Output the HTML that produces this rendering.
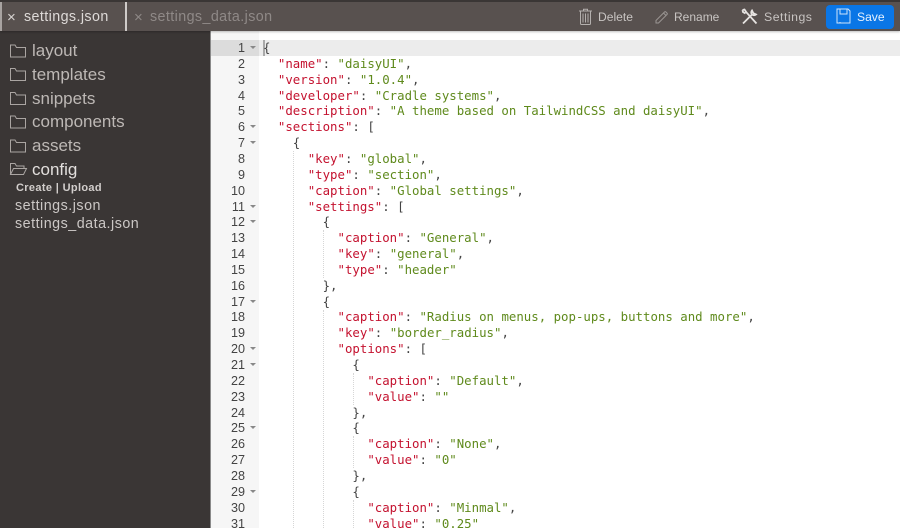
<!DOCTYPE html>
<html><head><meta charset="utf-8">
<style>
html,body{margin:0;padding:0;width:900px;height:528px;overflow:hidden;background:#fff}
body{position:relative;font-family:"Liberation Sans",sans-serif}
.a{position:absolute}
#hd{left:0;top:0;width:900px;height:31px;background:#58514f;border-top:2px solid #3a3635;box-sizing:border-box;box-shadow:0 1px 2px rgba(0,0,0,.25);z-index:3}
.t{position:absolute;white-space:nowrap;line-height:18px}
#side{left:0;top:31px;width:210px;height:497px;background:#3a3635}
#ln{left:210px;top:31px;width:1px;height:497px;background:#8a8a8a}
#gut{left:211px;top:31px;width:48px;height:497px;background:#f6f6f6}
.n{position:absolute;left:211px;width:34px;text-align:right;font-size:12.6px;line-height:16px;color:#444}
.f{position:absolute;left:250px;width:0;height:0;border-left:3px solid transparent;border-right:3px solid transparent;border-top:3.5px solid #888}
.c{position:absolute;left:263px;font-family:"DejaVu Sans Mono",monospace;font-size:12.38px;line-height:16px;color:#444;white-space:pre}
.k{color:#c4122f}.s{color:#5f8a1c}
.g{position:absolute;width:0;border-left:1px dotted #d6d6d6}
.side{color:#bdb8b5;font-size:17px}
</style></head><body>
<div class="a" id="hd"></div>
<div class="a" style="left:0;top:2px;width:2px;height:29px;background:#a8a3a1;z-index:4"></div>
<div class="a" style="left:125px;top:2px;width:2px;height:29px;background:#cfcbc9;z-index:4"></div>
<div style="position:absolute;left:0;top:0;width:900px;height:31px;z-index:5">
<div class="t" style="left:7px;top:9px;font-size:15px;color:#d8d4d2">×</div>
<div class="t" style="left:24px;top:8px;font-size:14.3px;letter-spacing:.4px;color:#dedad8">settings.json</div>
<div class="t" style="left:134px;top:9px;font-size:15px;color:#8f8987">×</div>
<div class="t" style="left:150px;top:8px;font-size:14.3px;letter-spacing:.4px;color:#8f8987">settings_data.json</div>

<svg class="a" style="left:578px;top:8px" width="16" height="17" viewBox="0 0 16 17" fill="none" stroke="#b4b0ae" stroke-width="1"><path d="M1 3h13M5.500 3V1.200h4V3M2.500 3v12.500a1 1 0 0 0 1 1h8a1 1 0 0 0 1-1V3M5 5.500v9M7.500 5.500v9M10 5.500v9"/></svg>
<div class="t" style="left:598px;top:8px;font-size:12.100px;color:#c8c4c2">Delete</div>
<svg class="a" style="left:655px;top:10px" width="14" height="14" viewBox="0 0 14 14" fill="none" stroke="#9a9593" stroke-width="1"><path d="M1 10.500 9.500 2a1 1 0 0 1 1.400 0l1.100 1.100a1 1 0 0 1 0 1.400L3.500 13H1zM8.500 3l2.500 2.500"/></svg>
<div class="t" style="left:674px;top:8px;font-size:12px;color:#c8c4c2">Rename</div>
<svg class="a" style="left:741px;top:8px" width="17" height="17" viewBox="0 0 17 17" fill="none" stroke="#e6e3e1" stroke-width="1.800"><path d="M2 15.500 11 6.500M11 2.500a3 3 0 0 0 0 4 3 3 0 0 0 4 0L12.800 5.500 12 4.500zM1.500 2 3.500 1.500 5.500 4.500 15.500 15.500M1.500 2 2 4 4.500 5.500"/></svg>
<div class="t" style="left:764px;top:8px;font-size:12.300px;letter-spacing:.5px;color:#c8c4c2">Settings</div>
<div class="a" style="left:825.500px;top:5px;width:68px;height:24px;background:#0a76e6;border-radius:4px"></div>
<svg class="a" style="left:836px;top:8px" width="15" height="16" viewBox="0 0 15 16" fill="none" stroke="#cfe4fb" stroke-width="1"><path d="M1 1h11l2 2v12H1zM4 1v5h7V1M4 15v-1"/></svg>
<div class="t" style="left:857px;top:8px;font-size:12.100px;color:#e6f1fd">Save</div>
</div>

<div class="a" id="side"></div>
<svg class="a" style="left:0;top:0" width="40" height="180" fill="none" stroke="#aaa5a2" stroke-width="1"><path d="M10.500 45V57h15V47.500h-9L15 45z"/><path d="M10.500 68.500V80.500h15V71h-9L15 68.500zM10.500 92.500V104.500h15V95h-9L15 92.500zM10.500 116V128h15V118.500h-9L15 116zM10.500 140V152h15V142.500h-9L15 140z"/><path d="M10.500 174.500V163.500H15L16.500 166H24V168.500M10.500 174.500 13.500 168.500H26.500L23.500 174.500z"/></svg>
<div class="t side" style="left:32px;top:42px">layout</div>
<div class="t side" style="left:32px;top:66px">templates</div>
<div class="t side" style="left:32px;top:90px">snippets</div>
<div class="t side" style="left:32px;top:113px">components</div>
<div class="t side" style="left:32px;top:137px">assets</div>
<div class="t side" style="left:32px;top:161px;color:#e2dfdd">config</div>
<div class="t" style="left:16px;top:179px;font-size:11px;font-weight:bold;color:#d2cecc;letter-spacing:.35px">Create | Upload</div>
<div class="t" style="left:15px;top:197px;font-size:14.300px;letter-spacing:.5px;color:#cbc7c5">settings.json</div>
<div class="t" style="left:15px;top:215px;font-size:14.300px;letter-spacing:.5px;color:#cbc7c5">settings_data.json</div>

<div class="a" id="ln"></div>
<div class="a" id="gut"></div>
<div class="a" style="left:259px;top:40px;width:641px;height:16px;background:#ececec"></div>
<div class="a" style="left:211px;top:40px;width:48px;height:16px;background:#dcdcdc"></div>
<div class="a" style="left:263px;top:40px;width:2px;height:16px;background:#a9a9a9"></div>

<div class="g" style="left:292.500px;top:151px;height:377px"></div>
<div class="g" style="left:322.500px;top:230px;height:48px"></div>
<div class="g" style="left:322.500px;top:310px;height:218px"></div>
<div class="g" style="left:352.500px;top:373px;height:32px"></div>
<div class="g" style="left:352.500px;top:436px;height:32px"></div>
<div class="g" style="left:352.500px;top:500px;height:28px"></div>

<div class="n" style="top:40px">1</div><div class="n" style="top:55.850px">2</div><div class="n" style="top:71.700px">3</div><div class="n" style="top:87.550px">4</div><div class="n" style="top:103.400px">5</div><div class="n" style="top:119.250px">6</div><div class="n" style="top:135.100px">7</div><div class="n" style="top:150.950px">8</div><div class="n" style="top:166.800px">9</div><div class="n" style="top:182.650px">10</div><div class="n" style="top:198.500px">11</div><div class="n" style="top:214.350px">12</div><div class="n" style="top:230.200px">13</div><div class="n" style="top:246.050px">14</div><div class="n" style="top:261.900px">15</div><div class="n" style="top:277.750px">16</div><div class="n" style="top:293.600px">17</div><div class="n" style="top:309.450px">18</div><div class="n" style="top:325.300px">19</div><div class="n" style="top:341.150px">20</div><div class="n" style="top:357px">21</div><div class="n" style="top:372.850px">22</div><div class="n" style="top:388.700px">23</div><div class="n" style="top:404.550px">24</div><div class="n" style="top:420.400px">25</div><div class="n" style="top:436.250px">26</div><div class="n" style="top:452.100px">27</div><div class="n" style="top:467.950px">28</div><div class="n" style="top:483.800px">29</div><div class="n" style="top:499.650px">30</div><div class="n" style="top:515.500px">31</div>

<div class="f" style="top:46px"></div><div class="f" style="top:125.250px"></div><div class="f" style="top:141.100px"></div><div class="f" style="top:204.500px"></div><div class="f" style="top:220.350px"></div><div class="f" style="top:299.600px"></div><div class="f" style="top:347.150px"></div><div class="f" style="top:363px"></div><div class="f" style="top:426.400px"></div><div class="f" style="top:489.800px"></div>

<div class="c" style="top:40px">{</div>
<div class="c" style="top:55.850px">  <span class="k">"name"</span>: <span class="s">"daisyUI"</span>,</div>
<div class="c" style="top:71.700px">  <span class="k">"version"</span>: <span class="s">"1.0.4"</span>,</div>
<div class="c" style="top:87.550px">  <span class="k">"developer"</span>: <span class="s">"Cradle systems"</span>,</div>
<div class="c" style="top:103.400px">  <span class="k">"description"</span>: <span class="s">"A theme based on TailwindCSS and daisyUI"</span>,</div>
<div class="c" style="top:119.250px">  <span class="k">"sections"</span>: [</div>
<div class="c" style="top:135.100px">    {</div>
<div class="c" style="top:150.950px">      <span class="k">"key"</span>: <span class="s">"global"</span>,</div>
<div class="c" style="top:166.800px">      <span class="k">"type"</span>: <span class="s">"section"</span>,</div>
<div class="c" style="top:182.650px">      <span class="k">"caption"</span>: <span class="s">"Global settings"</span>,</div>
<div class="c" style="top:198.500px">      <span class="k">"settings"</span>: [</div>
<div class="c" style="top:214.350px">        {</div>
<div class="c" style="top:230.200px">          <span class="k">"caption"</span>: <span class="s">"General"</span>,</div>
<div class="c" style="top:246.050px">          <span class="k">"key"</span>: <span class="s">"general"</span>,</div>
<div class="c" style="top:261.900px">          <span class="k">"type"</span>: <span class="s">"header"</span></div>
<div class="c" style="top:277.750px">        },</div>
<div class="c" style="top:293.600px">        {</div>
<div class="c" style="top:309.450px">          <span class="k">"caption"</span>: <span class="s">"Radius on menus, pop-ups, buttons and more"</span>,</div>
<div class="c" style="top:325.300px">          <span class="k">"key"</span>: <span class="s">"border_radius"</span>,</div>
<div class="c" style="top:341.150px">          <span class="k">"options"</span>: [</div>
<div class="c" style="top:357px">            {</div>
<div class="c" style="top:372.850px">              <span class="k">"caption"</span>: <span class="s">"Default"</span>,</div>
<div class="c" style="top:388.700px">              <span class="k">"value"</span>: <span class="s">""</span></div>
<div class="c" style="top:404.550px">            },</div>
<div class="c" style="top:420.400px">            {</div>
<div class="c" style="top:436.250px">              <span class="k">"caption"</span>: <span class="s">"None"</span>,</div>
<div class="c" style="top:452.100px">              <span class="k">"value"</span>: <span class="s">"0"</span></div>
<div class="c" style="top:467.950px">            },</div>
<div class="c" style="top:483.800px">            {</div>
<div class="c" style="top:499.650px">              <span class="k">"caption"</span>: <span class="s">"Minmal"</span>,</div>
<div class="c" style="top:515.500px">              <span class="k">"value"</span>: <span class="s">"0.25"</span></div>
</body></html>
